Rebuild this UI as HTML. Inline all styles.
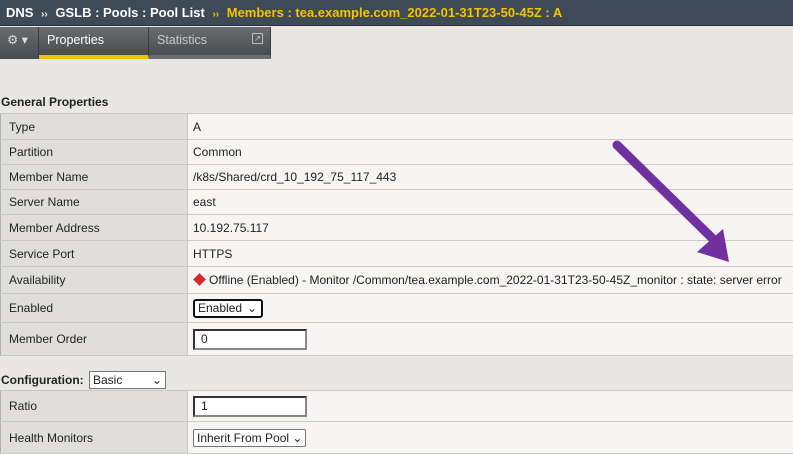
<!DOCTYPE html>
<html><head><style>
*{margin:0;padding:0;box-sizing:border-box}
body{width:793px;height:452px;overflow:hidden;background:#e8e7e4;font-family:"Liberation Sans",Arial,sans-serif;font-size:12px;color:#222;position:relative}
.hdr{position:absolute;left:0;top:0;width:793px;height:26px;background:#3e4a55;border-bottom:1px solid #2a333b;color:#fff;font-weight:bold;font-size:13px;line-height:26px;padding-left:6px;white-space:nowrap}
.hdr .y{color:#f5c300}
.hdr .s{font-size:10px;margin:0 4px}
.tabs{position:absolute;left:0;top:27px;height:32px;width:271px;background:#55595d}
.tab{position:absolute;top:0;height:32px;color:#fff;font-size:12.5px;line-height:26px;padding-left:8px;background:linear-gradient(#6a6d70,#4a4d50);border-right:1px solid #3a3c3e}
.t1{left:39px;width:110px;border-bottom:4px solid #f3c000}
.t2{left:149px;width:122px;color:#c8c8c8;border-bottom:4px solid #6c6f72}
.gear{left:0;width:39px;padding-left:7px;color:#ddd}
.sec{position:absolute;left:1px;font-weight:bold;font-size:12px}
table{position:absolute;left:0;width:793px;border-collapse:collapse}
td{border-top:1px solid #c9c9c7;border-bottom:1px solid #c9c9c7;padding-left:8px;font-size:12px;white-space:nowrap}
td.l{width:187px;background:#dfdedb;border-left:1px solid #b0b0ae;border-right:1px solid #c9c9c7}
td.v{background:#f6f5f3;padding-left:5px}
.sel{display:inline-block;border:2px solid #111;border-radius:3px;padding:0 3px;height:19px;line-height:15px;background:#fff;width:70px;position:relative}
.inp{display:inline-block;width:114px;height:21px;border:2px solid #333;border-bottom-color:#888;border-right-color:#888;background:#fff;padding-left:6px;line-height:17px}
.sel2{display:inline-block;border:1px solid #777;background:#fff;height:18px;line-height:16px;padding:0 3px}
</style></head><body>
<div class="hdr">DNS <span class="s">››</span> GSLB : Pools : Pool List <span class="y"><span class="s">››</span> Members : tea.example.com_2022-01-31T23-50-45Z : A</span></div>
<div class="tabs">
<div class="tab gear">⚙ ▾</div>
<div class="tab t1">Properties</div>
<div class="tab t2">Statistics<span style="position:absolute;left:103px;top:6px;width:11px;height:11px;border:1px solid #bbb;font-size:8px;line-height:9px;text-align:center">↗</span></div>
</div>
<div class="sec" style="top:95px">General Properties</div>
<table style="top:113px">
<tr style="height:26px"><td class="l">Type</td><td class="v">A</td></tr>
<tr style="height:25px"><td class="l">Partition</td><td class="v">Common</td></tr>
<tr style="height:25px"><td class="l">Member Name</td><td class="v">/k8s/Shared/crd_10_192_75_117_443</td></tr>
<tr style="height:25px"><td class="l">Server Name</td><td class="v">east</td></tr>
<tr style="height:26px"><td class="l">Member Address</td><td class="v">10.192.75.117</td></tr>
<tr style="height:26px"><td class="l">Service Port</td><td class="v">HTTPS</td></tr>
<tr style="height:27px"><td class="l">Availability</td><td class="v"><span style="display:inline-block;width:9px;height:9px;background:#d42a2a;transform:rotate(45deg);margin:0 5px 0 2px"></span>Offline (Enabled) - Monitor /Common/tea.example.com_2022-01-31T23-50-45Z_monitor : state: server error</td></tr>
<tr style="height:29px"><td class="l">Enabled</td><td class="v"><span class="sel">Enabled<span style="position:absolute;right:4px">⌄</span></span></td></tr>
<tr style="height:33px"><td class="l">Member Order</td><td class="v"><span class="inp">0</span></td></tr>
</table>
<div class="sec" style="top:371px">Configuration: <span class="sel2" style="font-weight:normal;width:77px;margin-left:2px">Basic<span style="float:right">⌄</span></span></div>
<table style="top:390px">
<tr style="height:31px"><td class="l">Ratio</td><td class="v"><span class="inp">1</span></td></tr>
<tr style="height:32px"><td class="l">Health Monitors</td><td class="v"><span class="sel2" style="border-radius:2px">Inherit From Pool ⌄</span></td></tr>
</table>
<svg style="position:absolute;left:0;top:0" width="793" height="452">
<line x1="617" y1="145" x2="712" y2="238" stroke="#7030a0" stroke-width="9" stroke-linecap="round"/>
<polygon points="729,262 697,252 723,229" fill="#7030a0"/>
</svg>
</body></html>
